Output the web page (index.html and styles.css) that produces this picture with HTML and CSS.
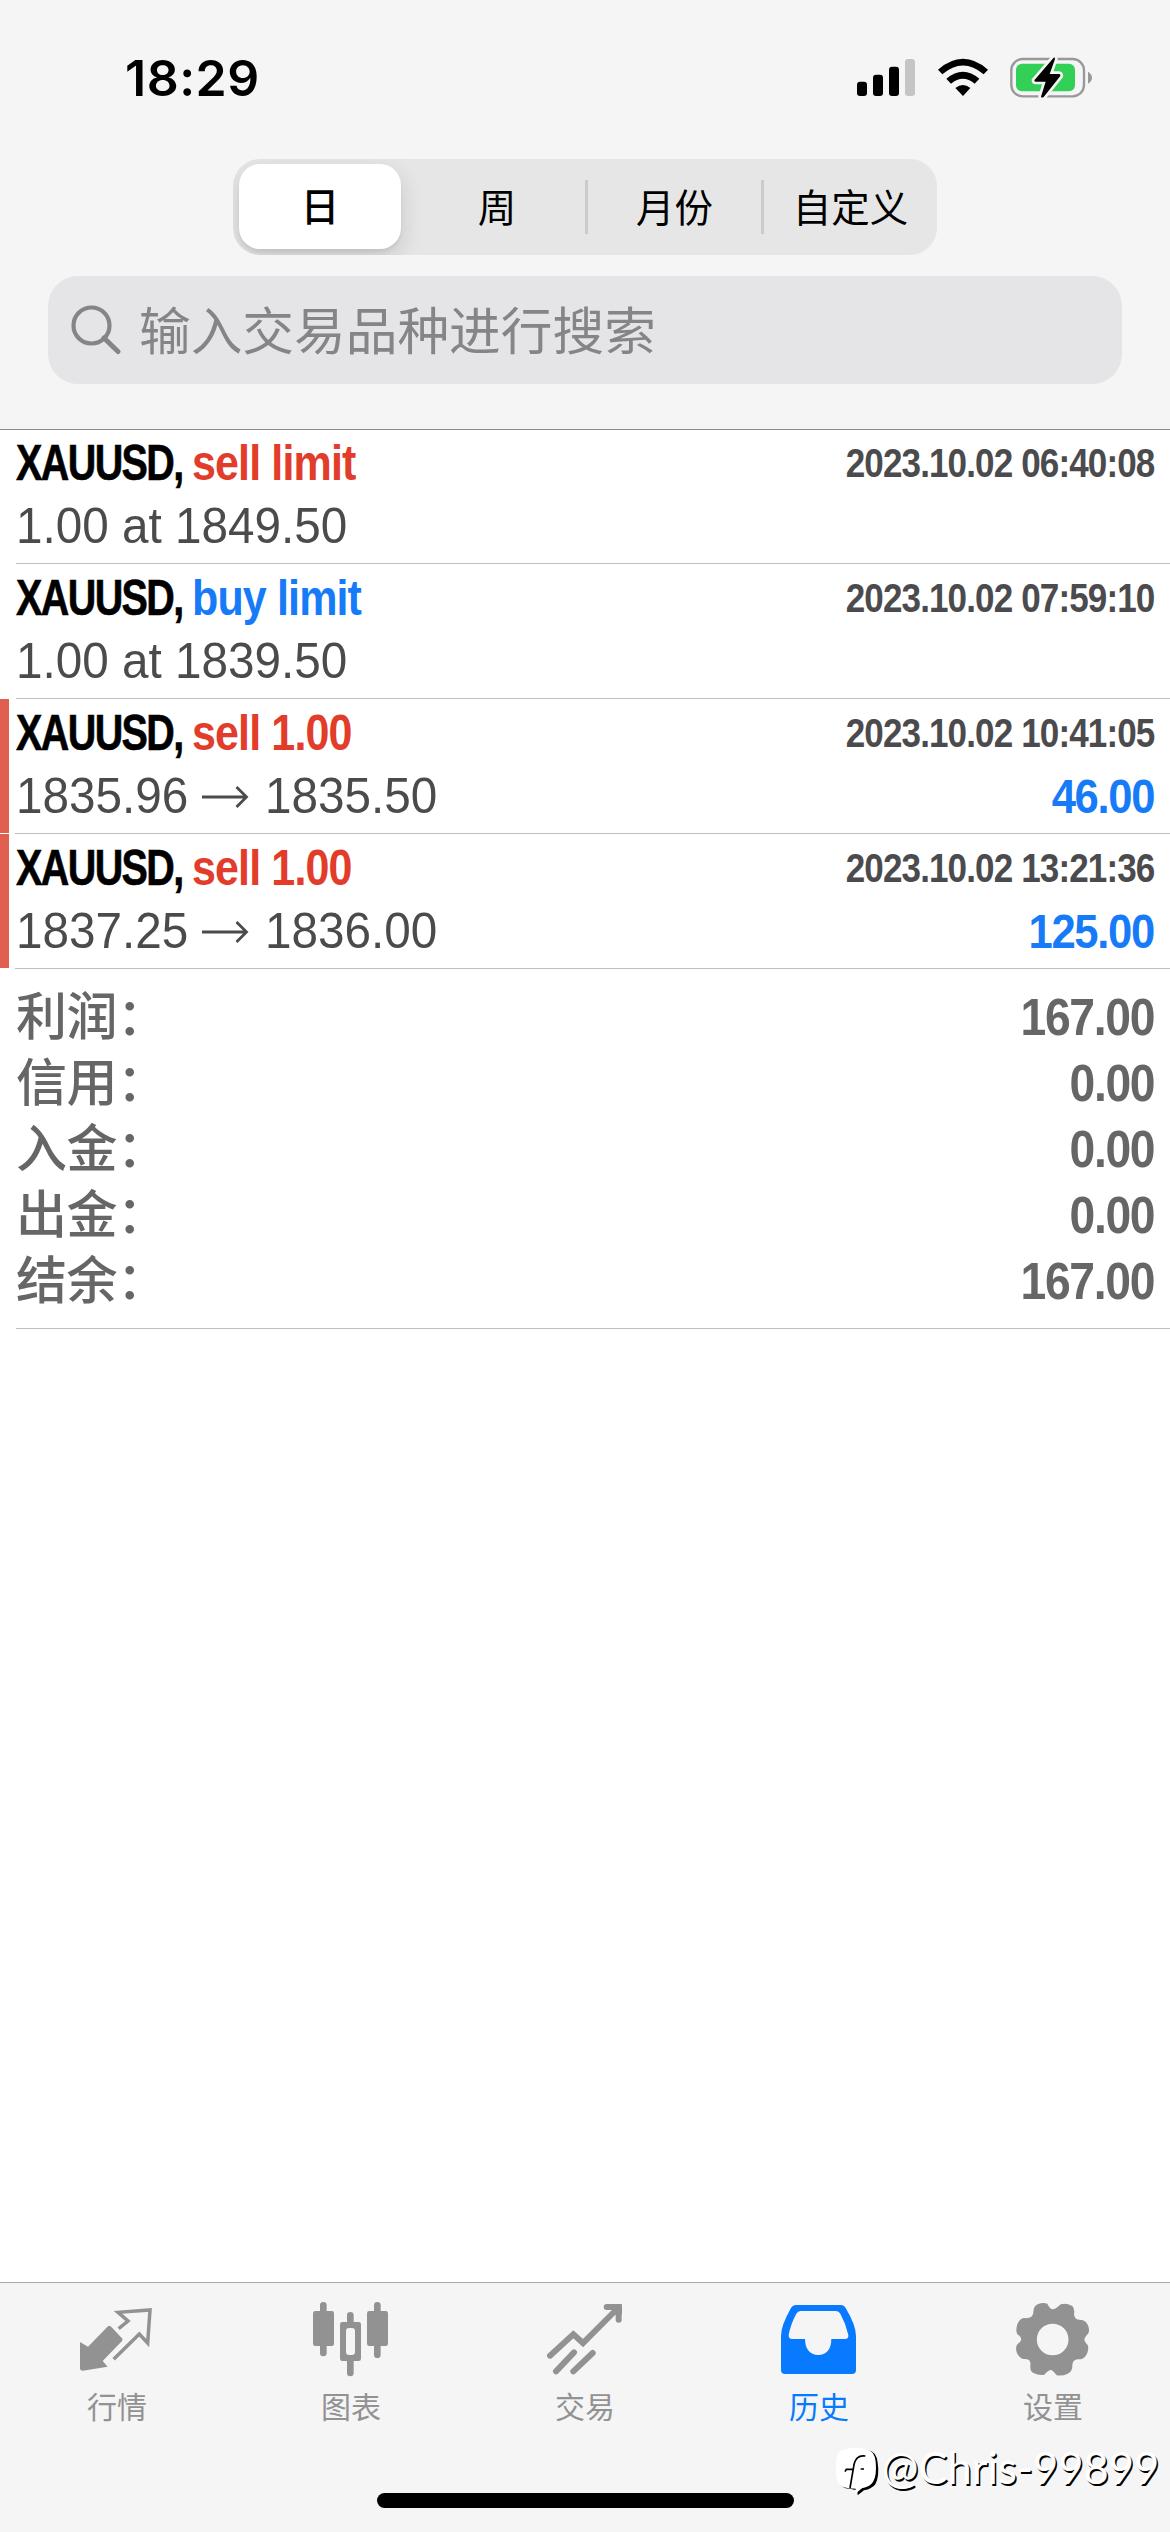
FILE: index.html
```html
<!DOCTYPE html>
<html lang="zh-CN">
<head>
<meta charset="utf-8">
<title>历史</title>
<link rel="stylesheet" href="styles.css">
</head>
<body>
<header class="top">
  <div class="status">
    <span class="clock">18:29</span>
    <div class="status-icons">
      <svg width="58" height="40" viewBox="48 54 174 120">
        <rect x="48" y="125" width="30" height="43" rx="9"/>
        <rect x="96" y="104" width="30" height="64" rx="9"/>
        <rect x="144" y="80" width="30" height="88" rx="9"/>
        <rect x="192" y="57" width="30" height="111" rx="9" fill="#c5c5c5"/>
      </svg>
      <svg class="wifi" width="52" height="40" viewBox="287 54 156 120">
        <path d="M290 89Q365 24 440 89L427 103Q365 50 303 103Z"/>
        <path d="M315 116Q365 74 414 116L400 131Q365 101 329 131Z"/>
        <path d="M342 144Q365 126 387 144L365 168Z"/>
      </svg>
      <svg class="battery" width="82" height="44" viewBox="507 48 246 132">
        <rect x="511" y="57" width="218" height="112" rx="34" fill="none" stroke="#98989b" stroke-width="7"/>
        <path d="M741 95Q753 102 753 113Q753 124 741 131Z" fill="#98989b"/>
        <rect x="525" y="71" width="177" height="83" rx="18" fill="#33d058"/>
        <path class="bolt" d="M638 53L580 121Q580 125 584 125L614 125L600 170Q602 175 608 171L658 108Q659 103 655 102L626 102L642 57Q642 52 638 53Z"/>
      </svg>
    </div>
  </div>
  <nav class="segments">
    <span class="segment selected">日</span>
    <span class="segment">周</span>
    <span class="segment divided">月份</span>
    <span class="segment divided">自定义</span>
  </nav>
  <div class="search">
    <svg width="50" height="50" viewBox="0 0 50 50"><circle cx="20.500" cy="20.500" r="18" fill="none" stroke="#858587" stroke-width="4.200"/><path d="M33 33L47 46.500" stroke="#858587" stroke-width="5" stroke-linecap="round"/></svg>
    <span>输入交易品种进行搜索</span>
  </div>
</header>
<main class="history">
  <section class="deal first">
    <div class="line"><span class="title"><b class="symbol">XAUUSD,</b><b class="side sell">sell limit</b></span><time>2023.10.02 06:40:08</time></div>
    <div class="line"><span class="price">1.00 at 1849.50</span></div>
  </section>
  <section class="deal">
    <div class="line"><span class="title"><b class="symbol">XAUUSD,</b><b class="side buy">buy limit</b></span><time>2023.10.02 07:59:10</time></div>
    <div class="line"><span class="price">1.00 at 1839.50</span></div>
  </section>
  <section class="deal closed">
    <div class="line"><span class="title"><b class="symbol">XAUUSD,</b><b class="side sell">sell 1.00</b></span><time>2023.10.02 10:41:05</time></div>
    <div class="line"><span class="quotes"><span class="price">1835.96</span><svg class="arrow" width="48" height="24" viewBox="0 0 48 24"><path d="M1 12H45M35.500 2L45.500 12L35.500 22"/></svg><span class="price">1835.50</span></span><b class="profit">46.00</b></div>
  </section>
  <section class="deal closed">
    <div class="line"><span class="title"><b class="symbol">XAUUSD,</b><b class="side sell">sell 1.00</b></span><time>2023.10.02 13:21:36</time></div>
    <div class="line"><span class="quotes"><span class="price">1837.25</span><svg class="arrow" width="48" height="24" viewBox="0 0 48 24"><path d="M1 12H45M35.500 2L45.500 12L35.500 22"/></svg><span class="price">1836.00</span></span><b class="profit">125.00</b></div>
  </section>
  <dl class="summary">
    <div><dt>利润：</dt><dd>167.00</dd></div>
    <div><dt>信用：</dt><dd>0.00</dd></div>
    <div><dt>入金：</dt><dd>0.00</dd></div>
    <div><dt>出金：</dt><dd>0.00</dd></div>
    <div><dt>结余：</dt><dd>167.00</dd></div>
  </dl>
</main>
<footer class="bottom">
  <nav class="tabs">
    <span class="tab">
      <svg viewBox="114 90 234 234"><path d="M120 216L144 230L204 169Q208 166 212 169L246 205Q249 209 246 213L188 273L203 290L128 302Q120 302 120 294Z"/><path d="M236 176L264 153L234 127L330 120L323 219L298 192L221 268" fill="none" stroke="currentColor" stroke-width="10.500"/></svg>
      行情
    </span>
    <span class="tab">
      <svg viewBox="816 90 234 234"><rect x="840" y="96" width="20" height="163" rx="10"/><rect x="819" y="123" width="63" height="105" rx="7"/><rect x="1002" y="96" width="20" height="168" rx="10"/><rect x="981" y="123" width="63" height="105" rx="7"/><rect x="921" y="126" width="20" height="50" rx="10"/><rect x="921" y="250" width="20" height="69" rx="10"/><rect x="900" y="156" width="63" height="117" rx="7"/><rect x="918" y="174" width="27" height="81" rx="9" fill="#f5f5f5"/></svg>
      图表
    </span>
    <span class="tab">
      <svg viewBox="138 90 234 234"><path d="M150 257L220 193L249 219L354 114M320 111H356V149M168 304L222 247M220 304L278 249" fill="none" stroke="currentColor" stroke-width="18" stroke-linecap="round"/><path d="M340 102H360Q366 102 366 108V134Z"/></svg>
      交易
    </span>
    <span class="tab active">
      <svg viewBox="840 90 234 234"><path fill-rule="evenodd" d="M888 105H1022Q1032 105 1037 114Q1068 166 1068 198V300Q1068 312 1056 312H855Q843 312 843 300V198Q843 166 873 114Q878 105 888 105ZM902 123Q893 123 889 131Q872 162 866 195Q866 207 876 207H915C915 239 932 255 955 255C978 255 994 239 994 207H1035Q1046 207 1045 195Q1038 162 1021 131Q1017 123 1008 123Z"/></svg>
      历史
    </span>
    <span class="tab">
      <svg viewBox="642 90 234 234"><path fill-rule="evenodd" d="M713 103Q728 96 742 101Q750 118 758 118Q767 118 782 103Q798 98 817 108Q825 116 822 133C824 146 830 151 846 150Q859 152 865 169Q870 184 864 191C850 205 850 211 863 225Q867 234 862 249Q855 265 843 268C824 266 817 272 817 290Q816 305 803 311Q788 319 770 316Q758 300 752 300Q746 300 733 314Q718 317 700 309Q690 303 691 288C693 272 688 267 669 267Q656 263 650 247Q646 232 651 224C667 211 668 205 652 193Q646 182 652 163Q658 147 671 144C690 146 699 141 700 126Q700 109 713 103ZM758 161A47 47 0 1 0 758 256A47 47 0 1 0 758 161Z"/></svg>
      设置
    </span>
  </nav>
  <div class="home-indicator"></div>
  <div class="watermark">
    <svg width="46" height="50" viewBox="105 528 138 150"><path d="M140 537Q168 530 200 537Q226 542 229 575Q235 615 222 640Q212 654 188 658L169 673L168 658Q146 654 150 654Q112 652 109 620Q106 590 110 562Q115 540 140 537Z" transform="translate(4 3)" fill="#000"/><path d="M138 537Q168 530 198 537Q224 542 227 575Q231 615 219 636Q210 650 186 655L166 671L167 656L145 655Q112 652 109 620Q106 590 110 562Q115 540 138 537Z" fill="#fff"/><path d="M196 558Q166 553 161 590L150 654M135 605L139 598H162M182 597H192" fill="none" stroke="#000" stroke-width="5"/></svg>
    <span>@Chris-99899</span>
  </div>
</footer>
</body>
</html>
```
FILE: styles.css
```css
* { box-sizing: border-box; }
body {
  margin: 0;
  width: 1170px;
  height: 2532px;
  display: flex;
  flex-direction: column;
  background: #fff;
  font-family: "Liberation Sans", "Noto Sans CJK SC", sans-serif;
  overflow: hidden;
}
svg { display: block; flex: none; }

.top {
  height: 430px;
  background: #f5f5f5;
  border-bottom: 1px solid #8c8c8c;
  display: flex;
  flex-direction: column;
  align-items: center;
}
.status {
  width: 100%;
  height: 159px;
  padding: 48px 78px 0 125px;
  display: flex;
  justify-content: space-between;
  align-items: flex-start;
}
.clock {
  font: 600 50px/60px Inter, sans-serif;
  letter-spacing: 0.5px;
}
.status-icons { display: flex; padding-top: 10px; }
.wifi { margin-left: 22px; }
.battery { margin: -2px 0 0 21px; }
.bolt { stroke: #f5f5f5; stroke-width: 16px; paint-order: stroke; }

.segments {
  width: 704px;
  height: 96px;
  display: grid;
  grid-template-columns: repeat(4, 1fr);
  border-radius: 27px;
  background: #e6e6e6;
  overflow: hidden;
}
.segment {
  display: flex;
  align-items: center;
  justify-content: center;
  padding-bottom: 5px;
  font: 400 38.500px/60px "Noto Sans CJK SC", sans-serif;
}
.selected {
  margin: 5px 8px 6px 6px;
  border-radius: 21px;
  background: #fff;
  font-weight: 500;
  box-shadow: 0 9px 24px rgba(0, 0, 0, .14), 0 3px 3px rgba(0, 0, 0, .05);
}
.divided {
  padding-left: 3px;
  background: linear-gradient(#cbcbcb, #cbcbcb) 0 21px / 3px 54px no-repeat;
}

.search {
  width: 1074px;
  height: 108px;
  margin-top: 21px;
  padding-left: 23px;
  display: flex;
  align-items: center;
  gap: 18px;
  border-radius: 30px;
  background: #e5e5e7;
  color: #858587;
  font: 400 51.700px/70px "Noto Sans CJK SC", sans-serif;
}
.search span { padding-bottom: 4px; }

.history { flex: 1; }
.deal {
  height: 135px;
  margin-left: 16px;
  padding: 3px 16px 0 0;
  border-bottom: 1px solid #bfbfc2;
}
.first { height: 134px; padding-top: 2px; }
.closed {
  margin-left: 0;
  padding-left: 16px;
  border-image: linear-gradient(90deg, transparent 16px, #bfbfc2 16px) 1;
  background: linear-gradient(#e15f50, #e15f50) 0 0 / 9px 134px no-repeat;
}
.line {
  height: 63px;
  display: flex;
  justify-content: space-between;
  align-items: center;
  font-size: 50px;
  line-height: 63px;
  white-space: nowrap;
}
.title { display: flex; }
.symbol {
  width: 176px;
  letter-spacing: -2px;
  transform: scaleX(.79);
  transform-origin: 0 50%;
  -webkit-text-stroke: .6px;
}
.side {
  letter-spacing: -1px;
  transform: scaleX(.86);
  transform-origin: 0 50%;
}
.sell { color: #e23c2b; }
.buy { color: #177bf8; }
time {
  color: #4b4b4e;
  font-size: 40px;
  font-weight: 700;
  letter-spacing: -1px;
  transform: scaleX(.876);
  transform-origin: 100% 50%;
}
.price {
  color: #4b4b4e;
  transform: scaleX(.953);
  transform-origin: 0 50%;
}
.quotes { display: flex; align-items: center; }
.quotes .price { width: 173px; }
.arrow {
  margin: 0 16px 0 12px;
  fill: none;
  stroke: #4b4b4e;
  stroke-width: 2.800;
}
.profit {
  color: #177bf8;
  font-size: 49px;
  letter-spacing: -1.5px;
  transform: scaleX(.89);
  transform-origin: 100% 50%;
}

.summary {
  height: 360px;
  margin: 0 0 0 16px;
  padding: 15px 16px 0 0;
  border-bottom: 1px solid #bfbfc2;
  color: #666;
}
.summary div {
  height: 66px;
  display: flex;
  justify-content: space-between;
  line-height: 66px;
}
.summary dt {
  padding-top: 1px;
  font-size: 51px;
  font-weight: 500;
  letter-spacing: -.5px;
}
.summary dd {
  margin: 0;
  font-size: 52px;
  font-weight: 700;
  letter-spacing: -1.5px;
  transform: scaleX(.89);
  transform-origin: 100% 50%;
}

.bottom {
  position: relative;
  height: 250px;
  border-top: 1px solid #a9a9ab;
  background: #f5f5f5;
}
.tabs {
  display: grid;
  grid-template-columns: repeat(5, 1fr);
  padding-top: 17px;
}
.tab {
  display: flex;
  flex-direction: column;
  align-items: center;
  color: #929292;
  font: 400 30px/44px "Noto Sans CJK SC", sans-serif;
}
.tab svg {
  width: 78px;
  height: 78px;
  margin-bottom: 5px;
  fill: currentColor;
}
.active { color: #087aff; }
.home-indicator {
  width: 417px;
  height: 15px;
  margin: 66px auto 0;
  border-radius: 8px;
  background: #000;
}
.watermark {
  position: absolute;
  left: 835px;
  top: 163px;
  display: flex;
  color: #fff;
  font: 400 43.500px/42px Lato, sans-serif;
  white-space: nowrap;
}
.watermark span {
  margin-left: 1px;
  text-shadow: 1.500px 1.500px 0 #000;
}
```
